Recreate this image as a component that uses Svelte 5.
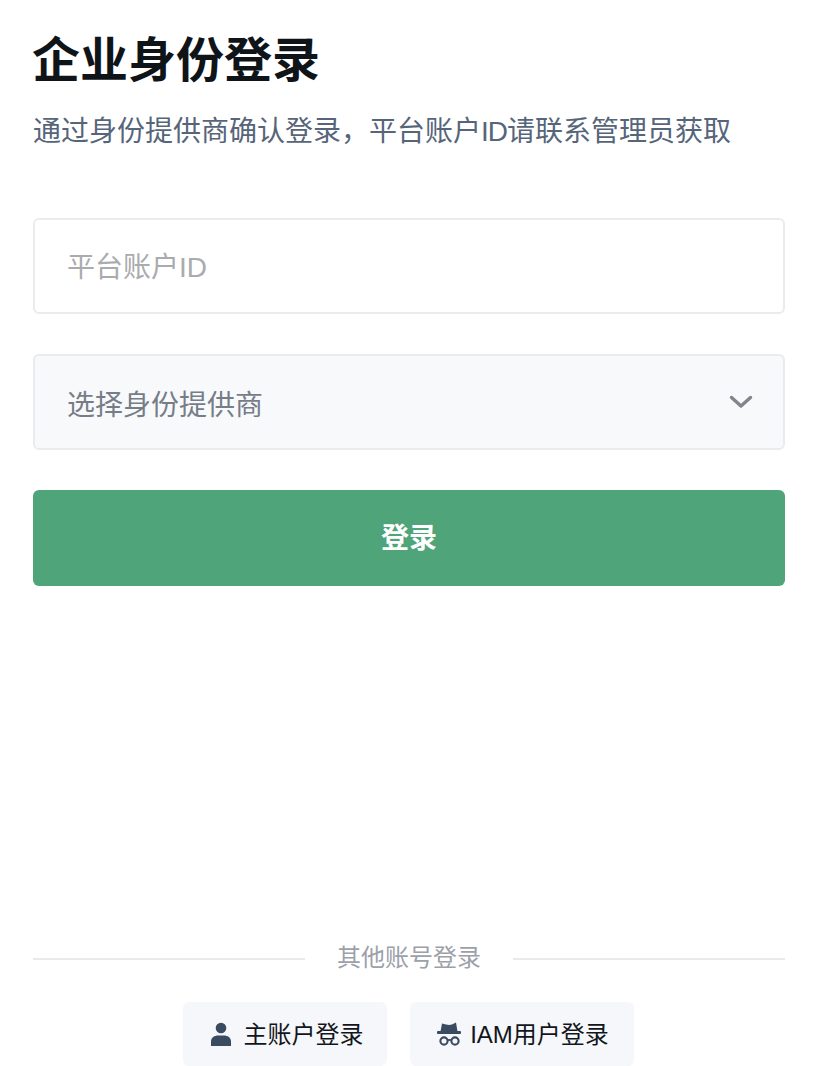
<script>
  let account = $state('');
</script>

<main class="page">
  <h1 class="title">企业身份登录</h1>
  <p class="subtitle">通过身份提供商确认登录，平台账户<span class="latin">ID</span>请联系管理员获取</p>

  <form class="form" onsubmit={(e) => e.preventDefault()}>
    <input class="field" type="text" placeholder="平台账户ID" bind:value={account} />
    <div class="field select">
      <span class="select-label">选择身份提供商</span>
      <svg class="chevron" width="24" height="14" viewBox="0 0 24 14" fill="none">
        <path d="M2.5 2.5 L12 11 L21.5 2.5" stroke="#82858c" stroke-width="3.4" stroke-linecap="round" stroke-linejoin="round" />
      </svg>
    </div>
    <button class="submit" type="submit">登录</button>
  </form>

  <div class="divider">
    <span class="line"></span>
    <span class="divider-text">其他账号登录</span>
    <span class="line"></span>
  </div>

  <div class="others">
    <button class="other main-account" type="button">
      <svg width="22" height="24" viewBox="0 0 22 24" fill="#3a4a60">
        <circle cx="11" cy="6" r="5.3" />
        <path d="M1 24 V19.5 C1 15.5 4.5 13.5 8 13.5 H14 C17.5 13.5 21 15.5 21 19.5 V24 Z" />
      </svg>
      <span class="label">主账户登录</span>
    </button>
    <button class="other iam" type="button">
      <svg width="26" height="24" viewBox="0 0 26 24" fill="none">
        <path d="M6 1.5 L10 2.6 C12 3.2 14 3.2 16 2.6 L20 .6 L21.5 9.5 H4.5 Z" fill="#3a4a60" />
        <rect x="1" y="9" width="24" height="3" rx="1" fill="#3a4a60" />
        <circle cx="8" cy="19" r="3.6" stroke="#3a4a60" stroke-width="2.1" />
        <circle cx="19" cy="19" r="3.6" stroke="#3a4a60" stroke-width="2.1" />
        <path d="M11.5 18 H15.5" stroke="#3a4a60" stroke-width="1.8" />
      </svg>
      <span class="label">IAM用户登录</span>
    </button>
  </div>
</main>

<style>
  :global(body) {
    margin: 0;
    background: #fff;
  }

  .page {
    box-sizing: border-box;
    width: 814px;
    height: 1066px;
    padding: 24px 29px 0 33px;
    display: flex;
    flex-direction: column;
    font-family: "Liberation Sans", "Noto Sans CJK SC", sans-serif;
    overflow: hidden;
  }

  .title {
    margin: 0 0 0 -1px;
    font-size: 48px;
    line-height: 64px;
    font-weight: 700;
    color: #0f1419;
    font-family: "Noto Sans CJK SC", sans-serif;
  }

  .subtitle {
    margin: 0;
    padding-top: 24px;
    font-size: 28px;
    line-height: 40px;
    color: #56657a;
  }

  .latin {
    letter-spacing: -1px;
  }

  .form {
    display: flex;
    flex-direction: column;
    gap: 40px;
    margin-top: 66px;
  }

  .field {
    box-sizing: border-box;
    width: 100%;
    height: 96px;
    padding: 3px 32px 0;
    border: 2px solid #e9ebee;
    border-radius: 6px;
    font-family: inherit;
    font-size: 28px;
    color: #1f2937;
    outline: none;
    background: #fff;
  }

  .field::placeholder {
    color: #a9abae;
    opacity: 1;
  }

  .select {
    display: flex;
    align-items: center;
    justify-content: space-between;
    padding: 0 30px 0 32px;
    background: #f8f9fb;
    color: #767d88;
  }

  .select-label {
    margin-top: 2px;
  }

  .submit {
    height: 96px;
    border: none;
    border-radius: 6px;
    padding: 0 0 4px;
    background: #4fa47a;
    color: #fff;
    font-family: inherit;
    font-size: 28px;
    font-weight: 700;
    cursor: pointer;
  }

  .divider {
    display: flex;
    align-items: center;
    gap: 32px;
    margin-top: 355px;
  }

  .line {
    flex: 1;
    height: 2px;
    background: #e8eaed;
  }

  .divider-text {
    margin-bottom: 2px;
    font-size: 24px;
    line-height: 34px;
    color: #9ca1a9;
  }

  .others {
    display: flex;
    justify-content: center;
    gap: 23px;
    margin-top: 25px;
    padding-right: 1px;
  }

  .other {
    display: flex;
    align-items: center;
    justify-content: center;
    height: 64px;
    border: none;
    border-radius: 6px;
    background: #f6f7fa;
    color: #12161c;
    font-family: inherit;
    font-size: 24px;
    cursor: pointer;
  }

  .label {
    margin-bottom: 4px;
  }

  .main-account {
    width: 204px;
    padding: 0 0 0 3px;
    gap: 12px;
  }

  .iam {
    width: 224px;
    padding: 0 0 0 1px;
    gap: 8px;
  }
</style>
